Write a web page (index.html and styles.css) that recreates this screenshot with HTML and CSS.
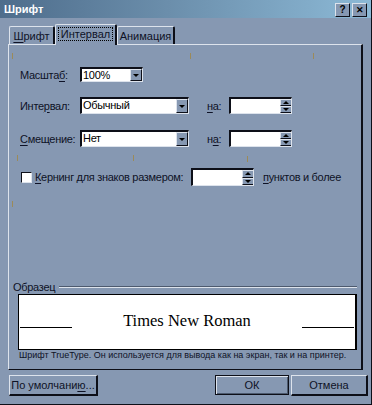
FILE: index.html
```html
<html lang="ru">
<head>
  <title>Шрифт</title>
  <link rel="stylesheet" href="styles.css">
</head>
<body>
  <div class="window">
    <div class="titlebar">
      <span class="title">Шрифт</span>
      <span class="caption-btns">
        <span class="cbtn">?</span>
        <span class="cbtn cbtn-x">✕</span>
      </span>
    </div>

    <div class="tabs">
      <div class="tab"><u>Ш</u>рифт</div>
      <div class="tab active"><span class="focus">Интервал</span></div>
      <div class="tab">Анимация</div>
    </div>

    <div class="panel">
      <div class="row row-scale">
        <span class="lbl">Масшта<u>б</u>:</span>
        <div class="combo combo-scale"><span class="combo-text">100%</span><span class="drop"></span></div>
      </div>

      <div class="row row-spacing">
        <span class="lbl">Инте<u>р</u>вал:</span>
        <div class="combo combo-wide"><span class="combo-text">Обычный</span><span class="drop"></span></div>
        <span class="lbl-on"><u>н</u>а:</span>
        <div class="spin"><span class="spin-text"></span><span class="spin-btns"><span class="up"></span><span class="down"></span></span></div>
      </div>

      <div class="row row-offset">
        <span class="lbl"><u>С</u>мещение:</span>
        <div class="combo combo-wide"><span class="combo-text">Нет</span><span class="drop"></span></div>
        <span class="lbl-on">н<u>а</u>:</span>
        <div class="spin"><span class="spin-text"></span><span class="spin-btns"><span class="up"></span><span class="down"></span></span></div>
      </div>

      <div class="row row-kern">
        <span class="check"></span>
        <span class="kern-lbl"><u>К</u>ернинг для знаков размером:</span>
        <div class="spin spin-kern"><span class="spin-text"></span><span class="spin-btns"><span class="up"></span><span class="down"></span></span></div>
        <span class="kern-after"><u>п</u>унктов и более</span>
      </div>

      <div class="group">
        <div class="group-head"><span>Образец</span><span class="group-line"></span></div>
        <div class="preview">
          <span class="pline"></span>
          <span class="ptext">Times New Roman</span>
          <span class="pline"></span>
        </div>
        <div class="note">Шрифт TrueType. Он используется для вывода как на экран, так и на принтер.</div>
      </div>

      <!-- stray marks from the capture -->
      <span class="tick" style="left:3px;top:8px"></span>
      <span class="tick" style="left:181px;top:8px"></span>
      <span class="tick" style="left:304px;top:8px"></span>
      <span class="tick" style="left:8px;top:110px"></span>
      <span class="tick" style="left:124px;top:110px"></span>
      <span class="tick" style="left:238px;top:111px"></span>
      <span class="tick" style="left:3px;top:156px"></span>
    </div>

    <div class="buttons">
      <div class="btn btn-default-set">По умолчани<u>ю</u>...</div>
      <div class="spacer"></div>
      <div class="btn btn-ok">ОК</div>
      <div class="btn btn-cancel">Отмена</div>
    </div>
  </div>
</body>
</html>
```

FILE: styles.css
```css
:root {
  --face: #8698b2;
  --light: #dde3ec;
  --dark: #0d0f18;
  --shadow: #4d5a6e;
  --text: #0e1226;
  --tick: #9c8a58;
}

body {
  margin: 0;
  background: var(--face);
  font-family: "Liberation Sans", Arial, sans-serif;
  font-size: 11px;
  letter-spacing: -0.3px;
  color: var(--text);
}

u {
  text-decoration-thickness: 1px;
  text-underline-offset: 2px;
}

.window {
  width: 371px;
  height: 404px;
  display: flex;
  flex-direction: column;
  background: var(--face);
  border-right: 1px solid var(--dark);
  border-bottom: 1px solid var(--dark);
}

/* title bar */
.titlebar {
  height: 18px;
  display: flex;
  align-items: center;
  justify-content: space-between;
  padding: 0 4px 0 4px;
  background: linear-gradient(to right, #4e6d8c 0%, #6b8eab 45%, #8cb9d6 100%);
}

.title {
  color: #fff;
  font-weight: bold;
  font-size: 11px;
  letter-spacing: 0;
}

.caption-btns {
  display: flex;
  gap: 2px;
  margin-top: 1px;
}

.cbtn {
  width: 13px;
  height: 12px;
  background: var(--face);
  border-top: 1px solid var(--light);
  border-left: 1px solid var(--light);
  border-right: 1px solid var(--dark);
  border-bottom: 1px solid var(--dark);
  font-size: 10px;
  font-weight: bold;
  line-height: 12px;
  text-align: center;
  color: #000;
}

.cbtn-x {
  font-size: 9px;
}

/* tabs */
.tabs {
  display: flex;
  align-items: flex-end;
  height: 20px;
  margin-top: 6px;
  padding-left: 9px;
  position: relative;
  z-index: 2;
}

.tab {
  height: 17px;
  line-height: 18px;
  text-align: center;
  white-space: nowrap;
  letter-spacing: 0;
  border-top: 1px solid var(--light);
  border-left: 1px solid var(--light);
  border-right: 2px solid var(--dark);
  border-radius: 2px 2px 0 0;
  background: var(--face);
}

.tab:first-child {
  width: 43px;
}

.tab.active {
  width: 59px;
  height: 20px;
  margin-bottom: -1px;
  line-height: 19px;
}

.focus {
  border: 1px dotted #000;
  padding: 0 2px;
}

.tab:last-child {
  width: 55px;
}

/* panel */
.panel {
  position: relative;
  height: 324px;
  margin: 0 8px 0 8px;
  padding: 0 0 0 11px;
  border-top: 1px solid var(--light);
  border-left: 1px solid var(--light);
  border-right: 2px solid var(--dark);
  border-bottom: 1px solid var(--dark);
}

.row {
  display: flex;
  align-items: center;
  white-space: nowrap;
}

.row-scale {
  margin-top: 22px;
  height: 15px;
}

.row-spacing {
  margin-top: 15px;
  height: 17px;
}

.row-offset {
  margin-top: 16px;
  height: 17px;
}

.row-kern {
  margin-top: 21px;
  height: 18px;
}

.lbl {
  width: 60px;
}

.lbl-on {
  margin-left: 18px;
  width: 22px;
}

/* combo boxes */
.combo,
.spin {
  display: flex;
  align-self: stretch;
  background: #fff;
  border-top: 2px solid var(--dark);
  border-left: 2px solid var(--dark);
  border-right: 1px solid var(--light);
  border-bottom: 1px solid var(--light);
}

.combo-scale {
  width: 60px;
}

.combo-wide {
  width: 106px;
}

.combo-text {
  flex: 1;
  padding-left: 1px;
  line-height: 13px;
  color: #000;
}

.drop {
  width: 10px;
  background: var(--face);
  border-left: 1px solid var(--light);
  border-top: 1px solid var(--light);
  border-right: 1px solid var(--dark);
  border-bottom: 1px solid var(--dark);
  display: flex;
  align-items: center;
  justify-content: center;
}

.drop::after {
  content: "";
  border-left: 3px solid transparent;
  border-right: 3px solid transparent;
  border-top: 3px solid #000;
}

.spin {
  width: 60px;
}

.spin-kern {
  width: 60px;
}

.spin-text {
  flex: 1;
}

.spin-btns {
  width: 11px;
  display: flex;
  flex-direction: column;
}

.up,
.down {
  flex: 1;
  background: var(--face);
  border-top: 1px solid var(--light);
  border-left: 1px solid var(--light);
  border-bottom: 1px solid var(--dark);
  display: flex;
  align-items: center;
  justify-content: center;
}

.up::after {
  content: "";
  border-left: 3px solid transparent;
  border-right: 3px solid transparent;
  border-bottom: 3px solid #000;
}

.down::after {
  content: "";
  border-left: 3px solid transparent;
  border-right: 3px solid transparent;
  border-top: 3px solid #000;
}

/* kerning */
.check {
  width: 9px;
  height: 9px;
  margin-left: 1px;
  background: #fff;
  border-top: 1px solid var(--dark);
  border-left: 1px solid var(--dark);
  border-right: 1px solid var(--light);
  border-bottom: 1px solid var(--light);
}

.kern-lbl {
  margin-left: 3px;
  width: 156px;
}

.kern-after {
  margin-left: 9px;
}

/* sample group */
.group {
  margin: 96px 0 0 -7px;
}

.group-head {
  display: flex;
  align-items: center;
  height: 10px;
}

.group-line {
  flex: 1;
  margin: 0 4px 0 4px;
  height: 0;
  border-top: 1px solid var(--shadow);
  border-bottom: 1px solid var(--light);
}

.preview {
  height: 56px;
  margin: 2px 4px 0 5px;
  background: #fff;
  border: 1px solid #000;
  border-right-width: 2px;
  display: flex;
  align-items: flex-end;
  padding-bottom: 21px;
  box-sizing: border-box;
}

.pline {
  width: 52px;
  height: 0;
  border-bottom: 1px solid #000;
  margin: 0 1px;
}

.ptext {
  flex: 1;
  text-align: center;
  font-family: "Liberation Serif", "Times New Roman", serif;
  font-size: 16.5px;
  letter-spacing: 0;
  line-height: 14px;
  color: #000;
}

.note {
  margin: 0 0 0 6px;
  font-size: 9px;
  letter-spacing: 0;
  line-height: 11px;
  white-space: nowrap;
}

.tick {
  position: absolute;
  width: 1px;
  height: 6px;
  background: var(--tick);
}

/* buttons */
.buttons {
  display: flex;
  margin: 5px 0 0 9px;
  padding-right: 3px;
}

.spacer {
  flex: 1;
}

.btn {
  height: 18px;
  line-height: 18px;
  text-align: center;
  white-space: nowrap;
  letter-spacing: 0;
  background: var(--face);
  border-top: 1px solid var(--light);
  border-left: 1px solid var(--light);
  border-right: 2px solid var(--dark);
  border-bottom: 2px solid var(--dark);
}

.btn-default-set {
  width: 86px;
}

.btn-ok {
  width: 72px;
  border: 1px solid var(--dark);
  box-shadow: inset 1px 1px 0 var(--light), inset -1px -1px 0 var(--shadow);
  height: 18px;
  margin-right: 2px;
}

.btn-cancel {
  width: 74px;
}
```
